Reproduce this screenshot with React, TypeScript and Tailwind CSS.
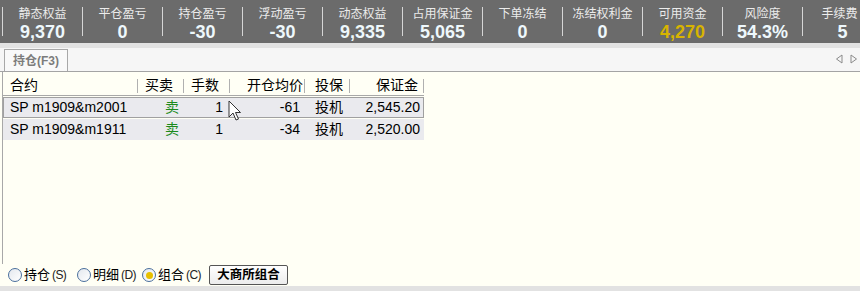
import React from 'react';

const stats = [
  { label: '静态权益', value: '9,370' },
  { label: '平仓盈亏', value: '0' },
  { label: '持仓盈亏', value: '-30' },
  { label: '浮动盈亏', value: '-30' },
  { label: '动态权益', value: '9,335' },
  { label: '占用保证金', value: '5,065' },
  { label: '下单冻结', value: '0' },
  { label: '冻结权利金', value: '0' },
  { label: '可用资金', value: '4,270', gold: true },
  { label: '风险度', value: '54.3%' },
  { label: '手续费', value: '5', last: true },
];

const rows = [
  { contract: 'SP m1909&m2001', side: '卖', qty: '1', price: '-61', hedge: '投机', margin: '2,545.20', selected: true },
  { contract: 'SP m1909&m1911', side: '卖', qty: '1', price: '-34', hedge: '投机', margin: '2,520.00', selected: false },
];

const font = { fontFamily: "'Liberation Sans', 'Noto Sans CJK SC', sans-serif" };

const Radio: React.FC<{ checked?: boolean; label: string; hot: string; width: string }> = ({ checked, label, hot, width }) => (
  <div className={`flex items-center ${width}`}>
    <span className="w-[14px] h-[14px] rounded-full border border-[#4a6f9c] bg-gradient-to-br from-[#e4e8ee] to-white flex items-center justify-center">
      {checked && <span className="w-[7px] h-[7px] rounded-full bg-[#e8c000]" />}
    </span>
    <span className="ml-[2px] text-[13px] text-black">{label}</span>
    <span className="ml-[2px] text-[12px] text-[#222] tracking-tighter">({hot})</span>
  </div>
);

const App: React.FC = () => {
  return (
    <div className="w-[860px] h-[291px] bg-[#fffff5] flex flex-col overflow-hidden relative" style={font}>
      {/* summary bar */}
      <div className="h-[43px] bg-[#6b6b6b] flex pl-[2px] shrink-0">
        {stats.map((s) => (
          <div key={s.label} className="flex items-center w-[80px] shrink-0">
            <div className="w-px h-[29px] bg-[#d6d6d6]" />
            <div className="flex-1 flex flex-col items-center pt-[5px]">
              <div className={`text-[12px] leading-[17px] text-[#ececec] whitespace-nowrap ${s.last ? 'pr-[6px]' : ''}`}>{s.label}</div>
              <div className={`text-[18px] leading-[19px] font-bold whitespace-nowrap ${s.gold ? 'text-[#d8b400]' : 'text-[#eef8fc]'}`}>
                {s.value}
              </div>
            </div>
          </div>
        ))}
      </div>
      <div className="h-[5px] bg-[#e2e2e2] shrink-0" />

      {/* tab strip */}
      <div className="h-[24px] bg-[#f6f6f6] border-b border-[#a4a4a4] flex items-end justify-between pl-[4px] pr-[2px] shrink-0">
        <div className="h-[22px] w-[64px] border border-b-0 border-[#a8a8a8] bg-[#f9f9f9] flex items-center justify-center text-[12px] font-bold text-[#7c7c7c]">
          持仓(F3)
        </div>
        <div className="flex items-center gap-[7px] self-center mb-[1px]">
          <svg width="8" height="10" viewBox="0 0 8 10"><path d="M7 1 L1.5 5 L7 9 Z" fill="none" stroke="#8a8a8a" /></svg>
          <svg width="8" height="10" viewBox="0 0 8 10"><path d="M1 1 L6.5 5 L1 9 Z" fill="none" stroke="#8a8a8a" /></svg>
        </div>
      </div>

      {/* table */}
      <div className="flex-1 ml-[2px] border-l border-[#a8a8a8] pt-[2px] text-[14px] text-black">
        <div className="w-[421px] h-[22px] flex items-center border-b border-[#a8a8a8] pt-[2px]">
          <div className="w-[134px] pl-[7px]">合约</div>
          <div className="w-px h-[14px] bg-[#b0b0b0]" />
          <div className="w-[45px] text-right pr-[10px]">买卖</div>
          <div className="w-px h-[14px] bg-[#b0b0b0]" />
          <div className="w-[45px] text-right pr-[10px]">手数</div>
          <div className="w-px h-[14px] bg-[#b0b0b0]" />
          <div className="w-[74px] text-right pr-[1px]">开仓均价</div>
          <div className="w-px h-[14px] bg-[#b0b0b0]" />
          <div className="w-[44px] pl-[10px]">投保</div>
          <div className="w-px h-[14px] bg-[#b0b0b0]" />
          <div className="w-[73px] text-right pr-[5px]">保证金</div>
          <div className="w-px h-[14px] bg-[#b0b0b0]" />
        </div>
        {rows.map((r) => (
          <div
            key={r.contract}
            className={`w-[421px] h-[21px] flex items-center mt-[1px] bg-[#eaeaee] ${r.selected ? 'border border-[#a0a0a0]' : 'border border-transparent'}`}
          >
            <div className="w-[134px] pl-[6px]">{r.contract}</div>
            <div className="w-[46px] text-right pr-[5px] text-[#1c8a1c]">{r.side}</div>
            <div className="w-[46px] text-right pr-[7px]">{r.qty}</div>
            <div className="w-[75px] text-right pr-[5px]">{r.price}</div>
            <div className="w-[45px] pl-[10px]">{r.hedge}</div>
            <div className="w-[73px] text-right pr-[3px]">{r.margin}</div>
          </div>
        ))}
      </div>

      {/* bottom controls */}
      <div className="h-[22px] flex items-center pl-[8px] shrink-0">
        <Radio label="持仓" hot="S" width="w-[69px]" />
        <Radio label="明细" hot="D" width="w-[65px]" />
        <Radio checked label="组合" hot="C" width="w-[67px]" />
        <button className="h-[20px] w-[79px] border border-[#555] rounded-[2px] bg-gradient-to-b from-white to-[#ececec] text-[12.5px] font-bold text-black leading-none">
          大商所组合
        </button>
      </div>
      <div className="h-[5px] bg-[#e2e2e2] shrink-0" />

      {/* mouse cursor */}
      <svg className="absolute left-[228px] top-[100px]" width="14" height="22" viewBox="0 0 14 22">
        <path d="M1 1 L1 17 L5 13 L8 20 L10.5 19 L7.5 12.5 L12.5 12.5 Z" fill="#fff" stroke="#333" strokeWidth="1" strokeLinejoin="round" />
      </svg>
    </div>
  );
};

export default App;
